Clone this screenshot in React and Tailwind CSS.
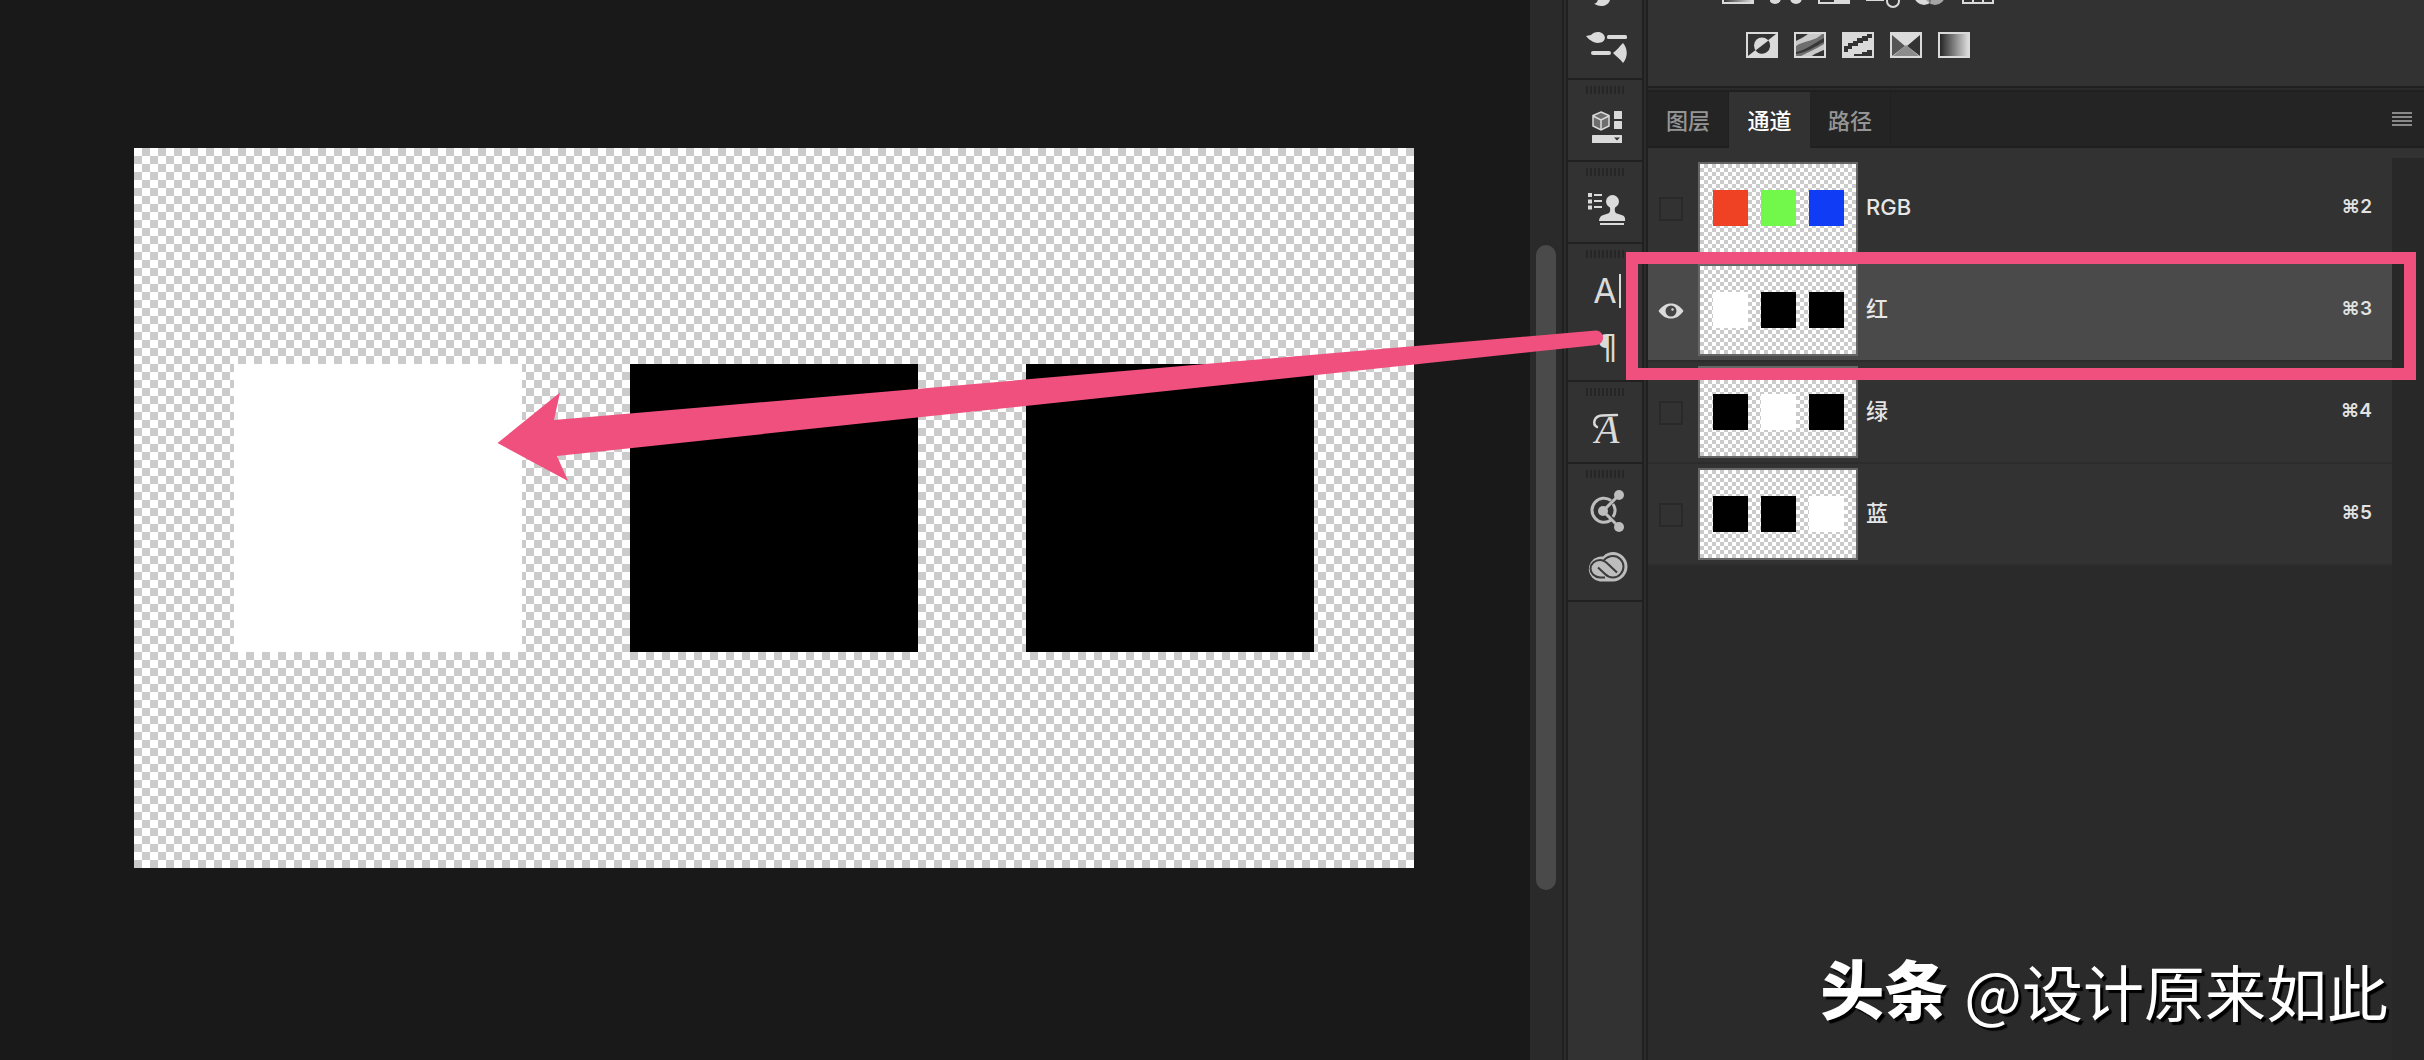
import React, { useState } from 'react';

const CHECKER_LARGE =
  'bg-white bg-[conic-gradient(#cbcbcb_25%,#ffffff_0_50%,#cbcbcb_0_75%,#ffffff_0)] bg-[length:16px_16px]';
const CHECKER_SMALL =
  'bg-white bg-[conic-gradient(#cbcbcb_25%,#ffffff_0_50%,#cbcbcb_0_75%,#ffffff_0)] bg-[length:8px_8px]';

const channels = [
  { id: 'rgb', name: 'RGB', shortcut: '⌘2', squares: ['bg-[#ef4124]', 'bg-[#72f84a]', 'bg-[#0f3cf4]'] },
  { id: 'red', name: '红', shortcut: '⌘3', squares: ['bg-white', 'bg-black', 'bg-black'] },
  { id: 'green', name: '绿', shortcut: '⌘4', squares: ['bg-black', 'bg-white', 'bg-black'] },
  { id: 'blue', name: '蓝', shortcut: '⌘5', squares: ['bg-black', 'bg-black', 'bg-white'] },
];

const tabs = ['图层', '通道', '路径'];

const Grip = () => (
  <svg className="mt-[6px] shrink-0" width="38" height="8" aria-hidden="true">
    {[0, 1, 2, 3, 4, 5, 6, 7, 8, 9].map((i) => (
      <rect key={i} x={i * 4} width="2" height="8" fill="#262626" />
    ))}
  </svg>
);

const ToolButton = ({ label, className = '', children }) => (
  <button type="button" aria-label={label} className={`flex h-10 w-12 shrink-0 items-center justify-center pl-1 text-[#dadada] ${className}`}>
    {children}
  </button>
);

const Toolbar = () => (
  <nav className="flex w-[74px] shrink-0 flex-col bg-[#323232]">
    <div className="flex h-20 flex-col items-center border-b-2 border-[#212121]">
      <svg className="shrink-0" width="42" height="6" viewBox="0 0 42 6" fill="#dadada" aria-hidden="true">
        <path d="M10 3.500C13 3.500 13 1.500 14 0H26C25 4 21 6.500 17 6C14 6 12 5 10 3.500Z" />
      </svg>
      <ToolButton label="画笔" className="mt-[22px]">
        <svg width="42" height="34" viewBox="0 0 42 34" fill="#dadada">
          <path d="M0 5L5 4C8 0.500 14 0 17 3C20 6 19 9 17 10.500C13 13 8 12 5 9.500C3 8.500 2 7 0 5Z" />
          <rect x="21" y="4" width="20" height="4" rx="1.500" />
          <rect x="5" y="20" width="20" height="4" rx="2" />
          <path d="M27 22C31 19 33 16 37 12C42 18 42 26 37 32C34 28 31 26 27 22Z" />
        </svg>
      </ToolButton>
    </div>
    <div className="flex h-[82px] flex-col items-center border-b-2 border-[#212121]">
      <Grip />
      <ToolButton label="3D 库" className="mt-[13px]">
        <svg width="30" height="32" viewBox="0 0 30 32" fill="#dadada">
          <path d="M9 1L17 4.500V15L9 19L1 15V4.500Z" fill="#6e6e6e" stroke="#dadada" strokeWidth="1.500" />
          <path d="M1 5L9 9L17 5M9 9V19" fill="none" stroke="#dadada" strokeWidth="1.500" />
          <rect x="22" width="8" height="8" rx="0.500" />
          <rect x="22" y="10" width="8" height="8" rx="0.500" />
          <rect y="24" width="30" height="8" rx="0.500" />
          <path d="M22 26.500H28L25 29.500Z" fill="#323232" />
        </svg>
      </ToolButton>
    </div>
    <div className="flex h-[82px] flex-col items-center border-b-2 border-[#212121]">
      <Grip />
      <ToolButton label="仿制源" className="mt-[14px]">
        <svg width="38" height="34" viewBox="0 0 38 34" fill="#dadada">
          <rect width="4" height="4" />
          <rect y="6.500" width="4" height="4" />
          <rect y="12.500" width="4" height="4" />
          <rect x="6" y="1" width="8" height="2" />
          <rect x="6" y="7" width="8" height="2" />
          <rect x="6" y="13" width="8" height="2" />
          <circle cx="24.500" cy="8.500" r="6.500" />
          <path d="M21.500 13H27.500C26 17 27 20 29 20.500L35 22.500C37 23.500 37.500 26 37 28H11C11 26 12 23.500 14 22.500L20 20.500C22 20 23 17 21.500 13Z" />
          <rect x="12" y="30" width="24" height="2" />
        </svg>
      </ToolButton>
    </div>
    <div className="flex h-[138px] flex-col items-center border-b-2 border-[#212121]">
      <Grip />
      <ToolButton label="字符" className="mt-[13px] gap-[2px]">
        <span className="font-['Inter',sans-serif] text-[34px] leading-10">A</span>
        <span className="h-[34px] w-[2px] bg-[#dadada]" />
      </ToolButton>
      <ToolButton label="段落" className="mt-4">
        <span className="font-['DejaVu_Sans',sans-serif] text-[34px] leading-10">¶</span>
      </ToolButton>
    </div>
    <div className="flex h-[82px] flex-col items-center border-b-2 border-[#212121]">
      <Grip />
      <ToolButton label="字形" className="mt-[13px]">
        <svg className="shrink-0" width="48" height="56" viewBox="-6 -10 48 56" fill="#dadada">
          <text x="6" y="32" fontSize="40" fontStyle="italic" fontFamily="'Liberation Serif', serif">
            A
          </text>
          {/* swash running into the top of the letter */}
          <path d="M8 16C3 13 5 5 13 4.500L28 4" fill="none" stroke="#dadada" strokeWidth="2.500" strokeLinecap="round" />
        </svg>
      </ToolButton>
    </div>
    <div className="flex h-[138px] flex-col items-center border-b-2 border-[#212121]">
      <Grip />
      <ToolButton label="共享" className="mt-[13px]">
        <svg width="36" height="42" viewBox="0 0 36 42" fill="#bdbdbd">
          <path d="M22 10.500A12 12 0 1 0 22 30" fill="none" stroke="#bdbdbd" strokeWidth="3" />
          <path d="M24 14A12 12 0 0 1 24 27" fill="none" stroke="#bdbdbd" strokeWidth="3" />
          <path d="M30 5L14 21L30 37" fill="none" stroke="#bdbdbd" strokeWidth="3" />
          <circle cx="14" cy="21" r="5" />
          <circle cx="30" cy="5" r="5" />
          <circle cx="30" cy="37" r="5" />
        </svg>
      </ToolButton>
      <ToolButton label="Creative Cloud" className="mt-4">
        <svg width="42" height="32" viewBox="0 0 42 32">
          <path d="M14 30.500A12.500 12.500 0 0 1 12 6C14 5.500 16 5.500 17 5.500C20 2 24 1 27 1C35 1 41.500 7.500 41.500 15.500S35 30.500 27 30.500Z" fill="#bdbdbd" />
          <path d="M19 26.500H14C8 26 4.500 22 4.500 17.500S9 9 14 9C18 9 20 11 22 13L31 21.500" fill="none" stroke="#3a3a3a" strokeWidth="2" />
          <path d="M18 9C21 6 24 5 27 5C33 5 37.500 10 37.500 15.500S33 26.500 27 26.500C23 26.500 21 25 19 23L12 16.500" fill="none" stroke="#3a3a3a" strokeWidth="2" />
        </svg>
      </ToolButton>
    </div>
  </nav>
);

const Adjustments = () => (
  <section className="h-[86px] shrink-0 bg-[#323232]" aria-label="调整">
    <div className="flex h-8 gap-4 pl-[74px]">
      <svg width="32" height="8">
        <defs>
          <linearGradient id="level">
            <stop offset="0" stopColor="#3a3a3a" />
            <stop offset="1" stopColor="#dadada" />
          </linearGradient>
        </defs>
        <rect width="32" height="4" fill="#dadada" />
        <rect x="2" width="28" height="2" fill="url(#level)" />
      </svg>
      <svg width="32" height="8" fill="#dadada">
        <circle cx="5" cy="-2" r="6" />
        <circle cx="26" cy="-2" r="6" />
      </svg>
      <svg width="32" height="8" fill="#dadada">
        <rect width="32" height="4" />
        <rect x="2" width="14" height="2" fill="#323232" />
      </svg>
      <svg width="36" height="8" className="-mr-1">
        <rect width="18" height="1" fill="#dadada" />
        <circle cx="27" cy="1" r="6" fill="none" stroke="#dadada" strokeWidth="2" />
      </svg>
      <svg width="32" height="8">
        <circle cx="10" cy="-5" r="10" fill="#dadada" />
        <circle cx="21" cy="-5" r="10" fill="#a5a5a5" />
        <path d="M15 0H17L16 4Z" fill="#6c6c6c" />
      </svg>
      <svg width="32" height="8">
        <rect width="32" height="4" fill="#dadada" />
        <path d="M2 0H10V2H2ZM12 0H20V2H12ZM22 0H30V2H22Z" fill="#323232" />
      </svg>
    </div>
    <div className="flex gap-4 pl-[98px]">
      <button type="button" aria-label="反相">
        <svg width="32" height="26" viewBox="0 0 32 26">
          <rect width="32" height="26" fill="#dadada" />
          <path d="M2 2H30L2 24Z" fill="#323232" />
          <circle cx="16" cy="13.500" r="8" fill="#dadada" />
          <path d="M22.500 8.500A8 8 0 0 1 9.500 18.500Z" fill="#323232" />
        </svg>
      </button>
      <button type="button" aria-label="色调分离">
        <svg width="32" height="26" viewBox="0 0 32 26">
          <rect width="32" height="26" fill="#dadada" />
          <rect x="2" y="2" width="28" height="22" fill="#6f6f6f" />
          <path d="M2 2H14L2 9Z" fill="#323232" />
          <path d="M14 2H28C22 9 9 9 2 14V9C6 7 11 5 14 2Z" fill="#c9c9c9" />
          <path d="M2 20C10 19 22 10 30 6V10C22 14 12 21 2 22Z" fill="#383838" />
          <path d="M7 24C14 20 22 17 30 12V18C26 20 22 21 18 24Z" fill="#c9c9c9" />
          <path d="M18 24C22 21 26 20 30 18V24Z" fill="#323232" />
        </svg>
      </button>
      <button type="button" aria-label="阈值" className="-mt-px">
        <svg width="32" height="26" viewBox="0 0 32 26">
          <rect width="32" height="26" fill="#dadada" />
          <path d="M2 20V14H6V11H11V9H15V6H20V4H25V2H30V6H26V9H21V11H16V14H10V17H6V20Z" fill="#323232" />
          <path d="M12 24V22H20V20H25V18H30V24Z" fill="#323232" />
        </svg>
      </button>
      <button type="button" aria-label="可选颜色">
        <svg width="32" height="26" viewBox="0 0 32 26">
          <rect width="32" height="26" fill="#dadada" />
          <path d="M2 3L15 14L2 24Z" fill="#555555" />
          <path d="M30 3L17 14L30 24Z" fill="#323232" />
          <path d="M3 24L16 13L29 24Z" fill="#8c8c8c" />
        </svg>
      </button>
      <button type="button" aria-label="渐变映射">
        <svg width="32" height="26" viewBox="0 0 32 26">
          <defs>
            <linearGradient id="map">
              <stop offset="0" stopColor="#262626" />
              <stop offset="1" stopColor="#dadada" />
            </linearGradient>
          </defs>
          <rect width="32" height="26" fill="#dadada" />
          <rect x="2" y="2" width="28" height="22" fill="url(#map)" />
        </svg>
      </button>
    </div>
  </section>
);

const Thumbnail = ({ squares }) => (
  <div className={`flex h-[92px] w-40 shrink-0 items-center justify-center gap-[13px] border-2 border-[#666666] ${CHECKER_SMALL}`}>
    {squares.map((color, i) => (
      <span key={i} className={`h-9 w-[35px] ${color}`} />
    ))}
  </div>
);

const ChannelRow = ({ channel, visible, onToggle }) => (
  <li className={`flex h-[102px] items-center border-b-2 border-[#2c2c2c] pr-5 ${visible ? 'bg-[#4a4a4a]' : 'bg-[#323232]'}`}>
    <div className="mr-1 flex w-[46px] shrink-0 justify-center pt-[2px]">
      <label className="relative flex h-6 w-6 items-center justify-center">
        <input
          type="checkbox"
          aria-label={channel.name}
          checked={visible}
          onChange={onToggle}
          className="h-6 w-6 appearance-none border-2 border-[#292929] checked:border-transparent"
        />
        {visible && (
          <svg className="pointer-events-none absolute" width="26" height="16" viewBox="0 0 26 16">
            <path d="M0.500 8C4 3 8 0.500 13 0.500S22 3 25.500 8C22 13 18 15.500 13 15.500S4 13 0.500 8Z" fill="#dadada" />
            <circle cx="13" cy="8" r="5.500" fill="#454545" />
            <circle cx="14.500" cy="6.500" r="1.200" fill="#dadada" />
          </svg>
        )}
      </label>
    </div>
    <Thumbnail squares={channel.squares} />
    <span className="grow pb-[2px] pl-2 text-[22px] leading-6 font-medium text-[#e6e6e6]">{channel.name}</span>
    <span className="pb-[2px] text-[19px] leading-6 font-semibold text-[#e2e2e2]">{channel.shortcut}</span>
  </li>
);

const ChannelsPanel = () => {
  const [tab, setTab] = useState('通道');
  const [shown, setShown] = useState({ red: true });

  return (
    <section className="relative flex min-h-0 grow flex-col bg-[#2a2a2a]">
      <div className="h-[6px] shrink-0 border-y-2 border-[#202020]" />
      <div className="flex h-14 shrink-0 items-stretch bg-[#242424]">
        {tabs.map((name) => (
          <button
            key={name}
            type="button"
            onClick={() => setTab(name)}
            className={`w-[81px] border-b-2 pt-1 text-[22px] font-medium ${
              name === tab ? 'border-[#323232] bg-[#323232] text-white' : 'border-r border-[#202020] text-[#959595]'
            }`}
          >
            {name}
          </button>
        ))}
        <div className="flex grow items-center justify-end border-b-2 border-[#202020] pr-3">
          <button type="button" aria-label="面板菜单" className="flex w-5 flex-col gap-[2px]">
            <span className="h-[2px] bg-[#8a8a8a]" />
            <span className="h-[2px] bg-[#8a8a8a]" />
            <span className="h-[2px] bg-[#8a8a8a]" />
            <span className="h-[2px] bg-[#8a8a8a]" />
          </button>
        </div>
      </div>
      <div className="h-[10px] shrink-0 bg-[#323232]" />
      <div className="flex min-h-0 grow">
        <ul className="grow">
          {channels.map((channel) => (
            <ChannelRow
              key={channel.id}
              channel={channel}
              visible={Boolean(shown[channel.id])}
              onToggle={() => setShown({ ...shown, [channel.id]: !shown[channel.id] })}
            />
          ))}
        </ul>
        <div className="w-8 shrink-0 bg-[#282828]" />
      </div>

      {/* highlight around the red channel */}
      <div className="pointer-events-none absolute top-[166px] right-2 -left-[22px] h-32 border-[12px] border-[#f0507e]" />

      <p className="absolute right-9 bottom-[34px] flex items-center gap-4 leading-[70px] whitespace-nowrap text-white [text-shadow:3px_3px_1px_#000000]">
        <strong className="text-[64px] font-black">头条</strong>
        <span className="font-['Noto_Sans_CJK_SC',sans-serif] text-[61px]">@设计原来如此</span>
      </p>
    </section>
  );
};

const Canvas = () => (
  <main className="flex min-w-0 grow items-start bg-[#191919] pt-[148px] pl-[134px]">
    <div className={`flex h-[720px] w-[1280px] shrink-0 items-center justify-center gap-[108px] ${CHECKER_LARGE}`}>
      <div className="h-72 w-72 bg-white" />
      <div className="h-72 w-72 bg-black" />
      <div className="h-72 w-72 bg-black" />
    </div>
  </main>
);

const Arrow = () => (
  <svg className="pointer-events-none absolute top-[328px] right-[820px]" width="1108" height="156" viewBox="496 328 1108 156" aria-hidden="true">
    <path d="M497.500 443L560 392.500L554 420L1596 330.500A7.300 7.300 0 0 1 1597 345L557 456L568 481Z" fill="#f0507e" />
  </svg>
);

export default function App() {
  return (
    <div className="relative flex h-screen overflow-hidden bg-[#191919] font-['Inter','Noto_Sans_CJK_SC',sans-serif]">
      <Canvas />
      <div className="flex w-8 shrink-0 flex-col items-center bg-[#2a2a2a] pt-[245px] pb-[170px]">
        <div className="w-5 grow rounded-full bg-[#4a4a4a]" />
      </div>
      <div className="w-[6px] shrink-0 border-x-2 border-[#202020] bg-[#2c2c2c]" />
      <Toolbar />
      <div className="w-[6px] shrink-0 border-x-2 border-[#202020] bg-[#2c2c2c]" />
      <div className="flex w-[776px] shrink-0 flex-col">
        <Adjustments />
        <ChannelsPanel />
      </div>
      <Arrow />
    </div>
  );
}
